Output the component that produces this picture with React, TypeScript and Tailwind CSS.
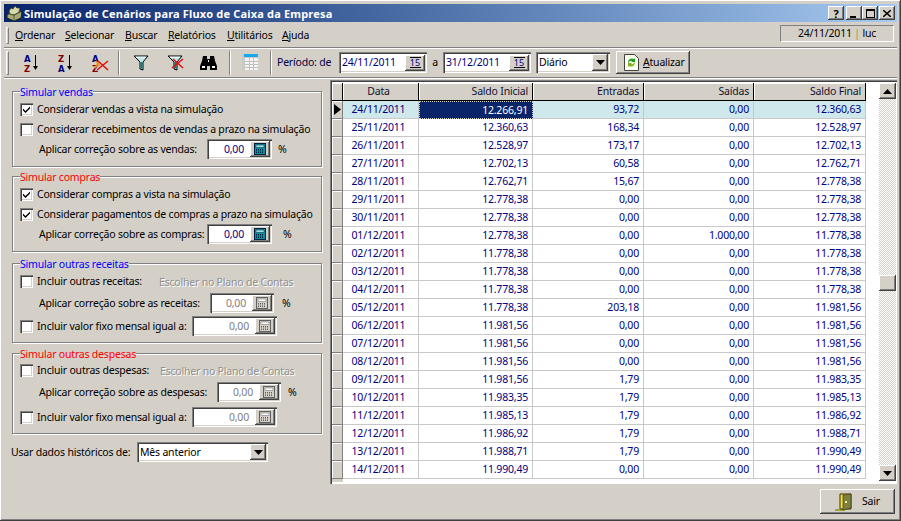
import React from "react";

const raised = "bg-[#d4d0c8] shadow-[inset_-1px_-1px_0_#404040,inset_1px_1px_0_#ffffff,inset_-2px_-2px_0_#808080]";
const sunken = "bg-white shadow-[inset_1px_1px_0_#808080,inset_2px_2px_0_#404040,inset_-1px_-1px_0_#ffffff,inset_-2px_-2px_0_#d4d0c8]";

const rows: string[][] = [
  ["24/11/2011", "12.266,91", "93,72", "0,00", "12.360,63"],
  ["25/11/2011", "12.360,63", "168,34", "0,00", "12.528,97"],
  ["26/11/2011", "12.528,97", "173,17", "0,00", "12.702,13"],
  ["27/11/2011", "12.702,13", "60,58", "0,00", "12.762,71"],
  ["28/11/2011", "12.762,71", "15,67", "0,00", "12.778,38"],
  ["29/11/2011", "12.778,38", "0,00", "0,00", "12.778,38"],
  ["30/11/2011", "12.778,38", "0,00", "0,00", "12.778,38"],
  ["01/12/2011", "12.778,38", "0,00", "1.000,00", "11.778,38"],
  ["02/12/2011", "11.778,38", "0,00", "0,00", "11.778,38"],
  ["03/12/2011", "11.778,38", "0,00", "0,00", "11.778,38"],
  ["04/12/2011", "11.778,38", "0,00", "0,00", "11.778,38"],
  ["05/12/2011", "11.778,38", "203,18", "0,00", "11.981,56"],
  ["06/12/2011", "11.981,56", "0,00", "0,00", "11.981,56"],
  ["07/12/2011", "11.981,56", "0,00", "0,00", "11.981,56"],
  ["08/12/2011", "11.981,56", "0,00", "0,00", "11.981,56"],
  ["09/12/2011", "11.981,56", "1,79", "0,00", "11.983,35"],
  ["10/12/2011", "11.983,35", "1,79", "0,00", "11.985,13"],
  ["11/12/2011", "11.985,13", "1,79", "0,00", "11.986,92"],
  ["12/12/2011", "11.986,92", "1,79", "0,00", "11.988,71"],
  ["13/12/2011", "11.988,71", "1,79", "0,00", "11.990,49"],
  ["14/12/2011", "11.990,49", "0,00", "0,00", "11.990,49"],
];

const cols = ["w-[76px]", "w-[114px]", "w-[111px]", "w-[110px]", "w-[112px]"];
const iconFont = "DejaVu Sans, sans-serif";

function Az({ top, bottom, topC, botC }: { top: string; bottom: string; topC: string; botC: string }) {
  return (
    <svg width="18" height="20" viewBox="0 0 18 20">
      <text x="0" y="8.5" fontFamily={iconFont} fontWeight="700" fontSize="8.5" fill={topC}>{top}</text>
      <text x="0" y="18.5" fontFamily={iconFont} fontWeight="700" fontSize="8.5" fill={botC}>{bottom}</text>
      <path d="M11.5 2v12" stroke="#000" strokeWidth="1" />
      <path d="M9 13h5l-2.5 4z" fill="#000" />
    </svg>
  );
}

function RedX({ x = 0, y = 0 }: { x?: number; y?: number }) {
  return (
    <g transform={`translate(${x} ${y})`} stroke="#e01010" strokeWidth="1.6" fill="none">
      <path d="M0 9L11 0" />
      <path d="M1 0L11 9" />
    </g>
  );
}

function AzClear() {
  return (
    <svg width="18" height="20" viewBox="0 0 18 20">
      <text x="0" y="8.5" fontFamily={iconFont} fontWeight="700" fontSize="8.5" fill="#000080">A</text>
      <text x="0" y="18.5" fontFamily={iconFont} fontWeight="700" fontSize="8.5" fill="#800000">Z</text>
      <path d="M4 8l4 5M3 15l3-5" stroke="#f09020" strokeWidth="1.5" fill="none" />
      <RedX x={5} y={8} />
    </svg>
  );
}

function Funnel({ clear }: { clear?: boolean }) {
  return (
    <svg width="18" height="18" viewBox="0 0 18 18">
      <path d="M1 2h14L10 8v8l-3-1V8z" fill="#bfe6e6" stroke="#000" strokeWidth="1" />
      <path d="M7.5 8h2v7l-2-1z" fill="#108080" />
      <path d="M3 3.2h10" stroke="#ffffff" strokeWidth="1" />
      {clear && <RedX x={5} y={5} />}
    </svg>
  );
}

function Binoculars() {
  return (
    <svg width="17" height="16" viewBox="0 0 17 16">
      <path d="M3 1h4v3h3V1h4l1 5 2 5v4h-7v-4H7v4H0v-4l2-5z" fill="#000" />
      <path d="M2 11h3v2H2zM12 11h3v2h-3zM8 5h1v2H8z" fill="#fff" />
    </svg>
  );
}

function GridIcon() {
  return (
    <svg width="17" height="17" viewBox="0 0 17 17">
      <rect x="0" y="0" width="16" height="16" fill="#c8c8c8" />
      <rect x="2" y="0" width="14" height="3" fill="#18a8f0" />
      <rect x="3" y="4" width="13" height="12" fill="#f4f4f4" />
      <path d="M3 7.5h13M3 10.5h13M3 13.5h13M7.5 4v12M11.5 4v12" stroke="#c0c0c0" strokeWidth="1" />
    </svg>
  );
}

function Calc({ off }: { off?: boolean }) {
  const main = off ? "#d4d0c8" : "#1090a0";
  const line = off ? "#606060" : "#002040";
  return (
    <svg width="12" height="12" viewBox="0 0 12 12">
      <rect x="0.5" y="0.5" width="11" height="11" fill={main} stroke={line} />
      <rect x="2" y="2" width="8" height="2.5" fill={off ? "#ffffff" : "#a0e0e0"} stroke={line} strokeWidth="0.5" />
      <path d="M2 6.5h8M2 8h8M2 9.5h8" stroke={line} strokeWidth="1" strokeDasharray="1 1" />
    </svg>
  );
}

function DateBtn() {
  return (
    <div className={`${raised} w-[20px] h-[16px] flex items-center justify-center`}>
      <div className="border-y border-black leading-[9px] h-[11px] w-[11px] text-[9px] tracking-normal text-[#000080] text-center font-['Liberation_Sans',sans-serif]">15</div>
    </div>
  );
}

function DateInput({ value, cls }: { value: string; cls: string }) {
  return (
    <div className={`${sunken} ${cls} h-[21px] flex items-center pl-[3px] pr-[2px] justify-between`}>
      <span className="text-[#000080]">{value}</span>
      <DateBtn />
    </div>
  );
}

function Arrow({ up }: { up?: boolean }) {
  return (
    <svg width="9" height="5" viewBox="0 0 9 5">
      <path d={up ? "M4.5 0L9 5H0z" : "M0 0h9L4.5 5z"} fill="#000" />
    </svg>
  );
}

function Check({ on }: { on?: boolean }) {
  return (
    <div className={`w-[13px] h-[13px] shrink-0 ${sunken} flex items-center justify-center`}>
      {on && (
        <svg width="9" height="9" viewBox="0 0 9 9">
          <path d="M1 3.5l2.5 2.5L8 1.5v2L3.5 8 1 5.5z" fill="#000" />
        </svg>
      )}
    </div>
  );
}

function NumInput({ off, cls }: { off?: boolean; cls: string }) {
  return (
    <div className={`${sunken} ${cls} h-[20px] flex items-center justify-end pr-[2px] shrink-0`}>
      <span className={`mr-[6px] ${off ? "text-[#808080]" : "text-[#000080]"}`}>0,00</span>
      <div className={`${raised} w-[20px] h-[16px] flex items-center justify-center`}>
        <Calc off={off} />
      </div>
    </div>
  );
}

function CheckRow({ on, label, labelCls = "", cls = "", children }: { on?: boolean; label: string; labelCls?: string; cls?: string; children?: React.ReactNode }) {
  return (
    <div className={`h-[20px] flex items-center pl-[7px] ${cls}`}>
      <Check on={on} />
      <span className={`ml-[4px] whitespace-nowrap ${labelCls}`}>{label}</span>
      {children}
    </div>
  );
}

function Group({ title, color, cls, children }: { title: string; color: string; cls: string; children: React.ReactNode }) {
  return (
    <section className={`relative border border-[#808080] shadow-[1px_1px_0_#ffffff,inset_1px_1px_0_#ffffff] ${cls}`}>
      <div className={`absolute left-[7px] top-[-7px] bg-[#d4d0c8] leading-[14px] whitespace-nowrap ${color}`}>{title}</div>
      {children}
    </section>
  );
}

function Disabled({ cls, text }: { cls: string; text: string }) {
  return <span className={`text-[#909090] [text-shadow:1px_1px_0_#ffffff] whitespace-nowrap ${cls}`}>{text}</span>;
}

export default function App() {
  return (
    <div className="w-[901px] h-[521px] bg-[#d4d0c8] flex flex-col p-[4px] overflow-hidden shadow-[inset_-1px_-1px_0_#404040,inset_1px_1px_0_#ffffff,inset_-2px_-2px_0_#808080] text-[10.5px] tracking-[-0.2px] leading-[13px] text-black font-['DejaVu_Sans',sans-serif]">
      {/* Title bar */}
      <header className="h-[18px] shrink-0 flex items-center bg-gradient-to-r from-[#0a246a] to-[#a6caf0] pr-[2px]">
        <svg width="17" height="17" viewBox="0 0 17 17" className="ml-[2px]">
          <path d="M1 10l7-6 8 3-1 6-7 3-7-3z" fill="#a8a878" stroke="#202818" />
          <path d="M3 6l2-3 2 1 2-3 2 2 3 0-1 4-5 3-4-1z" fill="#d8d8a8" stroke="#303820" strokeWidth="0.7" />
          <path d="M8 9v7M2 9l6 1 7-3" stroke="#405030" strokeWidth="0.8" fill="none" />
        </svg>
        <h1 className="ml-px text-white font-bold text-[11px] tracking-[0.18px] whitespace-nowrap">Simulação de Cenários para Fluxo de Caixa da Empresa</h1>
        <div className="ml-auto flex items-center">
          {[0, 1, 2, 3].map((i) => (
            <div key={i} className={`${raised} w-[16px] h-[14px] flex items-center justify-center font-bold text-[11px] ${i === 0 ? "mr-[2px]" : ""} ${i === 2 ? "mr-px" : ""}`}>
              {i === 0 && "?"}
              {i === 1 && <div className="w-[6px] h-[2px] bg-black mt-[7px] mr-[2px]" />}
              {i === 2 && <div className="w-[9px] h-[9px] border border-black border-t-2" />}
              {i === 3 && (
                <svg width="8" height="7" viewBox="0 0 8 7"><path d="M0 0l8 7M8 0L0 7" stroke="#000" strokeWidth="1.5" /></svg>
              )}
            </div>
          ))}
        </div>
      </header>

      {/* Menu */}
      <nav className="h-[25px] shrink-0 mt-px flex items-center border-b border-[#808080] shadow-[0_1px_0_#ffffff]">
        <div className="w-[3px] h-[17px] ml-[2px] mr-[6px] bg-[#d4d0c8] border-l border-t border-white border-r border-b border-r-[#808080] border-b-[#808080]" />
        {[
          ["O", "rdenar", "w-[50px]"],
          ["S", "elecionar", "w-[60px]"],
          ["B", "uscar", "w-[43px]"],
          ["R", "elatórios", "w-[59px]"],
          ["U", "tilitários", "w-[55px]"],
          ["A", "juda", "w-[40px]"],
        ].map(([a, b, w]) => (
          <span key={b} className={`${w} whitespace-nowrap`}><u>{a}</u>{b}</span>
        ))}
        <div className="ml-auto mr-[3px] mb-[4px] w-[114px] h-[17px] flex items-center justify-center border border-t-[#808080] border-l-[#808080] border-r-white border-b-white">
          <span>24/11/2011 <span className="text-[#c09030]">|</span> luc</span>
        </div>
      </nav>

      {/* Toolbar */}
      <div className="h-[30px] shrink-0 flex items-center border-b border-[#808080] shadow-[0_1px_0_#ffffff]">
        <div className="w-[3px] h-[24px] ml-[2px] bg-[#d4d0c8] border-l border-t border-white border-r border-b border-r-[#808080] border-b-[#808080]" />
        <div className="w-[20px] ml-[15px]"><Az top="A" bottom="Z" topC="#000080" botC="#800000" /></div>
        <div className="w-[20px] ml-[14px]"><Az top="Z" bottom="A" topC="#800000" botC="#000080" /></div>
        <div className="w-[20px] ml-[14px]"><AzClear /></div>
        <div className="w-[2px] h-[24px] ml-[6px] border-l border-[#808080] border-r border-r-white" />
        <div className="ml-[13px] w-[18px]"><Funnel /></div>
        <div className="ml-[16px] w-[18px]"><Funnel clear /></div>
        <div className="ml-[15px] w-[17px]"><Binoculars /></div>
        <div className="w-[2px] h-[24px] ml-[12px] border-l border-[#808080] border-r border-r-white" />
        <div className="ml-[11px] w-[17px]"><GridIcon /></div>
        <div className="w-[2px] h-[24px] ml-[11px] border-l border-[#808080] border-r border-r-white" />
        <span className="ml-[5px] w-[62px] whitespace-nowrap text-[#000040]">Período: de</span>
        <DateInput value="24/11/2011" cls="w-[88px]" />
        <span className="w-[16px] text-center">a</span>
        <DateInput value="31/12/2011" cls="w-[88px]" />
        <div className={`${sunken} ml-[5px] w-[74px] h-[21px] flex items-center justify-between pl-[3px] pr-[2px]`}>
          <span>Diário</span>
          <div className={`${raised} w-[16px] h-[17px] flex items-center justify-center`}><Arrow /></div>
        </div>
        <div className={`${raised} ml-[6px] w-[74px] h-[23px] flex items-center pl-[8px]`}>
          <svg width="15" height="17" viewBox="0 0 15 17">
            <path d="M0.5 0.5h10l4 4v12h-14z" fill="#fffff0" stroke="#404040" />
            <path d="M4 8a4 4 0 0 1 6-3l1-1v4H7l1-1a2 2 0 0 0-3 2z" fill="#20a020" />
            <path d="M11 9a4 4 0 0 1-6 3l-1 1V9h4l-1 1a2 2 0 0 0 3-2z" fill="#80b020" />
          </svg>
          <span className="ml-[4px]"><u>A</u>tualizar</span>
        </div>
      </div>

      {/* Main */}
      <main className="flex-1 min-h-0 flex mt-[2px]">
        <aside className="w-[326px] shrink-0 flex flex-col pl-[8px] pr-[8px] pt-[11px]">
          <Group title="Simular vendas" color="text-[#0000ff]" cls="h-[76px] pt-[7px]">
            <CheckRow on label="Considerar vendas a vista na simulação" />
            <CheckRow label="Considerar recebimentos de vendas a prazo na simulação" />
            <div className="h-[20px] flex items-center pl-[26px]">
              <span className="w-[168px] whitespace-nowrap">Aplicar correção sobre as vendas:</span>
              <NumInput cls="w-[65px]" />
              <span className="ml-[6px]">%</span>
            </div>
          </Group>
          <Group title="Simular compras" color="text-[#ff0000]" cls="h-[76px] pt-[7px] mt-[9px]">
            <CheckRow on label="Considerar compras a vista na simulação" />
            <CheckRow on label="Considerar pagamentos de compras a prazo na simulação" />
            <div className="h-[20px] flex items-center pl-[26px]">
              <span className="w-[168px] whitespace-nowrap">Aplicar correção sobre as compras:</span>
              <NumInput cls="w-[65px]" />
              <span className="ml-[11px]">%</span>
            </div>
          </Group>
          <Group title="Simular outras receitas" color="text-[#0000ff]" cls="h-[80px] pt-[7px] mt-[11px]">
            <CheckRow label="Incluir outras receitas:" labelCls="w-[122px]">
              <Disabled cls="mt-[2px]" text="Escolher no Plano de Contas" />
            </CheckRow>
            <div className="h-[24px] flex items-center pl-[26px]">
              <span className="w-[171px] whitespace-nowrap">Aplicar correção sobre as receitas:</span>
              <NumInput off cls="w-[64px]" />
              <span className="ml-[8px]">%</span>
            </div>
            <CheckRow label="Incluir valor fixo mensal igual a:" cls="mt-px">
              <div className="ml-auto mr-[44px]"><NumInput off cls="w-[85px]" /></div>
            </CheckRow>
          </Group>
          <Group title="Simular outras despesas" color="text-[#ff0000]" cls="h-[81px] pt-[6px] mt-[10px]">
            <CheckRow label="Incluir outras despesas:" labelCls="w-[123px]">
              <Disabled cls="mt-[2px]" text="Escolher no Plano de Contas" />
            </CheckRow>
            <div className="h-[24px] flex items-center pl-[26px]">
              <span className="w-[178px] whitespace-nowrap">Aplicar correção sobre as despesas:</span>
              <NumInput off cls="w-[64px]" />
              <span className="ml-[7px]">%</span>
            </div>
            <CheckRow label="Incluir valor fixo mensal igual a:" cls="mt-[3px]">
              <div className="ml-auto mr-[44px]"><NumInput off cls="w-[85px]" /></div>
            </CheckRow>
          </Group>
          <div className="flex items-center mt-[8px]">
            <span className="w-[126px] -ml-px whitespace-nowrap">Usar dados históricos de:</span>
            <div className={`${sunken} w-[131px] h-[20px] flex items-center justify-between pl-[3px] pr-[2px]`}>
              <span>Mês anterior</span>
              <div className={`${raised} w-[16px] h-[16px] flex items-center justify-center`}><Arrow /></div>
            </div>
          </div>
        </aside>

        <section className="flex-1 min-w-0 flex flex-col">
          <div className="h-[404px] shrink-0 bg-white flex shadow-[inset_1px_1px_0_#808080,inset_2px_2px_0_#404040,inset_-1px_-1px_0_#ffffff] pt-[3px] pb-[2px] pl-[2px] pr-px overflow-hidden">
            <div className="flex-1 min-w-0 flex overflow-hidden">
              <div className="w-[11px] shrink-0 flex flex-col bg-[#d4d0c8]">
                <div className="h-[18px] shrink-0 border-r border-b border-black shadow-[inset_1px_1px_0_#ffffff]" />
                {rows.map((r, i) => (
                  <div key={r[0]} className="h-[18px] shrink-0 border-r border-b border-[#808080] shadow-[inset_1px_1px_0_#ffffff] flex items-center pl-[2px]">
                    {i === 0 && <svg width="7" height="11" viewBox="0 0 7 11"><path d="M0 0l7 5.5L0 11z" fill="#000" /></svg>}
                  </div>
                ))}
              </div>
              <div className="w-[523px] shrink-0 flex flex-col">
                <div className="h-[18px] shrink-0 flex bg-[#d4d0c8] text-[#101030]">
                  {["Data", "Saldo Inicial", "Entradas", "Saídas", "Saldo Final"].map((h, i) => (
                    <div key={h} className={`${cols[i]} shrink-0 h-full flex items-center border-r border-b border-black shadow-[inset_1px_1px_0_#ffffff] pr-[4px] ${i === 0 ? "justify-center" : "justify-end"}`}>{h}</div>
                  ))}
                </div>
                {rows.map((r, i) => (
                  <div key={r[0]} className={`h-[18px] shrink-0 flex text-[#000080] ${i === 0 ? "bg-[#cfe8ec]" : "bg-white"}`}>
                    {r.map((c, j) => (
                      <div
                        key={j}
                        className={`${cols[j]} shrink-0 h-full flex items-center border-r border-b border-[#c8c8c8] pr-[4px] ${j === 0 ? "justify-center" : "justify-end"} ${i === 0 && j === 1 ? "bg-[#0a246a] text-white border-dotted border border-[#d4d0c8]" : ""}`}
                      >
                        {c}
                      </div>
                    ))}
                  </div>
                ))}
              </div>
            </div>
            <div className="w-[17px] shrink-0 ml-[13px] flex flex-col h-[398px] bg-[repeating-conic-gradient(#d4d0c8_0_25%,#ffffff_0_50%)] bg-[length:2px_2px]">
              <div className={`${raised} h-[16px] shrink-0 flex items-center justify-center`}><Arrow up /></div>
              <div className={`${raised} h-[16px] shrink-0 mt-[176px]`} />
              <div className={`${raised} h-[16px] shrink-0 mt-auto flex items-center justify-center`}><Arrow /></div>
            </div>
          </div>
          <div className="flex-1 flex justify-end items-start pt-[5px] pr-[2px]">
            <div className={`${raised} w-[75px] h-[25px] flex items-center pl-[15px]`}>
              <svg width="17" height="18" viewBox="0 0 17 18">
                <path d="M0 16h10v2H0z" fill="#a0a040" />
                <path d="M5 1h11v15H5z" fill="#f0e040" stroke="#403000" />
                <path d="M8 2l8-1v14l-8 2z" fill="#808040" stroke="#303010" strokeWidth="0.6" />
                <path d="M10 8h2v2h-2z" fill="#f0f0a0" />
              </svg>
              <span className="ml-[10px]">Sair</span>
            </div>
          </div>
        </section>
      </main>
    </div>
  );
}
